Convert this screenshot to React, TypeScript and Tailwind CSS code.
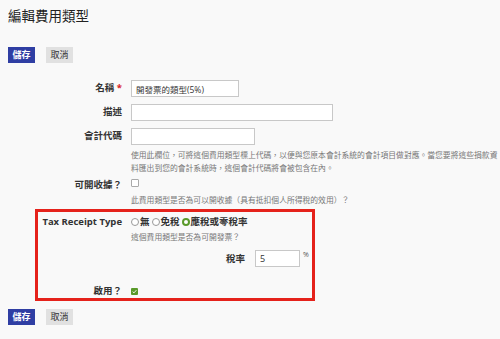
const font = { fontFamily: '"Open Sans", "Noto Sans CJK TC", sans-serif' }

function Buttons() {
  return (
    <div className="flex gap-[11px]">
      <button className="h-[16px] w-[27px] bg-[#2f3ea3] text-white text-[9px] leading-[16px] font-bold">儲存</button>
      <button className="h-[16px] w-[27px] bg-[#e1e1e1] text-[#333] text-[9px] leading-[16px]">取消</button>
    </div>
  )
}

function Label({ children, w = 'w-[114px]' }: { children: React.ReactNode; w?: string }) {
  return <div className={`${w} shrink-0 text-right text-[9.5px] font-bold text-[#333]`}>{children}</div>
}

function Radio({ checked, label }: { checked?: boolean; label: string }) {
  return (
    <span className="flex items-center">
      <span
        className={`inline-block w-[8px] h-[8px] rounded-full mr-[1px] bg-white ${
          checked ? 'border-[2px] border-[#5a9a2b]' : 'border border-[#999]'
        }`}
      />
      <span className="text-[9.5px] font-bold text-[#333]">{label}</span>
    </span>
  )
}

export default function App() {
  return (
    <div className="w-[500px] h-[339px] bg-[#f9f9f9] text-[#333] overflow-hidden px-2" style={font}>
      <h1 className="pt-[8px] text-[13.5px] leading-[16px] text-[#222]">編輯費用類型</h1>
      <div className="mt-[23px]">
        <Buttons />
      </div>

      <div className="mt-[17px] flex items-center gap-[9px] h-[17px]">
        <Label>
          名稱 <span className="text-[#d9232d]">*</span>
        </Label>
        <input
          readOnly
          value="開發票的類型(5%)"
          className="w-[108px] h-[17px] border border-[#c8c8c8] bg-white px-[4px] text-[8.5px] outline-none"
        />
      </div>
      <div className="mt-[7px] flex items-center gap-[9px] h-[17px]">
        <Label>描述</Label>
        <input readOnly className="w-[202px] h-[17px] border border-[#c8c8c8] bg-white" />
      </div>
      <div className="mt-[7px] flex items-center gap-[9px] h-[17px]">
        <Label>會計代碼</Label>
        <input readOnly className="w-[124px] h-[17px] border border-[#c8c8c8] bg-white" />
      </div>
      <div className="mt-[4px] flex gap-[9px]">
        <div className="w-[114px] shrink-0" />
        <p className="text-[7.8px] leading-[13px] text-[#777] whitespace-nowrap">
          使用此欄位，可將這個費用類型標上代碼，以便與您原本會計系統的會計項目做對應。當您要將這些捐款資
          <br />
          料匯出到您的會計系統時，這個會計代碼將會被包含在內。
        </p>
      </div>
      <div className="mt-[4px] flex items-center gap-[9px] h-[12px]">
        <Label>可開收據？</Label>
        <span className="inline-block w-[8px] h-[8px] border border-[#aaa] bg-white rounded-[1px] mt-[-4px]" />
      </div>
      <div className="mt-[3px] flex gap-[9px]">
        <div className="w-[114px] shrink-0" />
        <p className="text-[7.8px] leading-[12px] text-[#777]">此費用類型是否為可以開收據（具有抵扣個人所得稅的效用）？</p>
      </div>

      <div className="mt-[3px] ml-[27px] w-[280px] h-[92px] border-[3px] border-[#e5221b]">
        <div className="pt-[4px] flex items-center gap-[9px] h-[16px]">
          <Label w="w-[84px]">Tax Receipt Type</Label>
          <div className="flex items-center gap-[2px]">
            <Radio label="無" />
            <Radio label="免稅" />
            <Radio checked label="應稅或零稅率" />
          </div>
        </div>
        <div className="mt-[3px] flex gap-[9px]">
          <div className="w-[84px] shrink-0" />
          <p className="text-[7.8px] leading-[12px] text-[#777]">這個費用類型是否為可開發票？</p>
        </div>
        <div className="mt-[7px] flex items-start h-[17px]">
          <div className="w-[207px] shrink-0 text-right text-[9.5px] font-bold text-[#333] leading-[17px]">稅率</div>
          <input
            readOnly
            value="5"
            className="ml-[10px] w-[45px] h-[17px] border border-[#c8c8c8] bg-white px-[4px] text-[9px] outline-none"
          />
          <span className="ml-[3px] text-[7px] leading-[10px] text-[#555]">%</span>
        </div>
        <div className="mt-[18px] flex items-center gap-[9px] h-[12px]">
          <Label w="w-[84px]">啟用？</Label>
          <span className="inline-flex items-center justify-center w-[7px] h-[7px] rounded-[1px] bg-[#5a9a2b]">
            <svg viewBox="0 0 8 8" className="w-[5px] h-[5px]">
              <path d="M1 4.2 L3.2 6.2 L7 1.8" stroke="white" strokeWidth="1.4" fill="none" />
            </svg>
          </span>
        </div>
      </div>

      <div className="mt-[8px]">
        <Buttons />
      </div>
    </div>
  )
}
